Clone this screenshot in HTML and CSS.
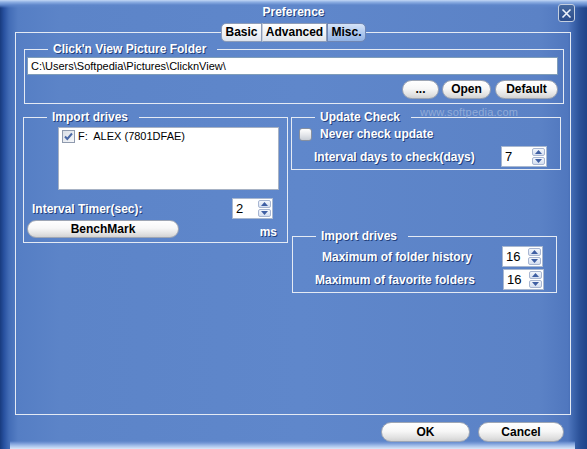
FILE: index.html
```html
<!DOCTYPE html>
<html>
<head>
<meta charset="utf-8">
<title>Preference</title>
<link rel="stylesheet" href="styles.css">
</head>
<body>
<div class="window">
  <div class="titlebar">
    <span></span>
    <div class="title">Preference</div>
    <div class="close-wrap">
      <div class="close">
        <svg width="11" height="11" viewBox="0 0 11 11"><path d="M1.5 1.5 L9.5 9.5 M9.5 1.5 L1.5 9.5" stroke="#eef3fb" stroke-width="1.6" fill="none"/></svg>
      </div>
    </div>
  </div>

  <div class="tabs">
    <div class="tab tab-basic">Basic</div>
    <div class="tab tab-adv">Advanced</div>
    <div class="tab tab-misc selected">Misc.</div>
  </div>

  <div class="frame">
    <fieldset class="group folder">
      <legend>Click'n View Picture Folder</legend>
      <div class="path">C:\Users\Softpedia\Pictures\ClicknView\</div>
      <div class="btn-row">
        <div class="pill w-dots">...</div>
        <div class="pill w-open">Open</div>
        <div class="pill w-default">Default</div>
      </div>
    </fieldset>

    <div class="columns">
      <fieldset class="group drives">
        <legend>Import drives</legend>
        <div class="listbox">
          <div class="list-item">
            <span class="check checked">
              <svg width="11" height="11" viewBox="0 0 11 11"><path d="M2 5.5 L4.3 8 L9 2.5" stroke="#4a68a6" stroke-width="2" fill="none"/></svg>
            </span>
            <span>F:&nbsp; ALEX (7801DFAE)</span>
          </div>
        </div>
        <div class="row timer-row">
          <span class="label">Interval Timer(sec):</span>
          <div class="spin w41">
            <span class="val">2</span>
            <span class="arrows">
              <span class="arrow"><svg width="7" height="4" viewBox="0 0 7 4"><path d="M0 4 L3.5 0 L7 4 Z" fill="#3f5fa3"/></svg></span>
              <span class="arrow"><svg width="7" height="4" viewBox="0 0 7 4"><path d="M0 0 L3.5 4 L7 0 Z" fill="#3f5fa3"/></svg></span>
            </span>
          </div>
        </div>
        <div class="row bench-row">
          <div class="pill bench">BenchMark</div>
          <span class="label ms">ms</span>
        </div>
      </fieldset>

      <div class="right-col">
        <fieldset class="group update">
          <legend>Update Check</legend>
          <div class="row never-row">
            <span class="check round"></span>
            <span class="label never">Never check update</span>
          </div>
          <div class="row days-row">
            <span class="label days">Interval days to check(days)</span>
            <div class="spin w46">
              <span class="val">7</span>
              <span class="arrows">
                <span class="arrow"><svg width="7" height="4" viewBox="0 0 7 4"><path d="M0 4 L3.5 0 L7 4 Z" fill="#3f5fa3"/></svg></span>
                <span class="arrow"><svg width="7" height="4" viewBox="0 0 7 4"><path d="M0 0 L3.5 4 L7 0 Z" fill="#3f5fa3"/></svg></span>
              </span>
            </div>
          </div>
        </fieldset>

        <fieldset class="group history">
          <legend>Import drives</legend>
          <div class="row hist-row">
            <span class="label hist">Maximum of folder history</span>
            <div class="spin w41">
              <span class="val">16</span>
              <span class="arrows">
                <span class="arrow"><svg width="7" height="4" viewBox="0 0 7 4"><path d="M0 4 L3.5 0 L7 4 Z" fill="#3f5fa3"/></svg></span>
                <span class="arrow"><svg width="7" height="4" viewBox="0 0 7 4"><path d="M0 0 L3.5 4 L7 0 Z" fill="#3f5fa3"/></svg></span>
              </span>
            </div>
          </div>
          <div class="row fav-row">
            <span class="label fav">Maximum of favorite folders</span>
            <div class="spin w41">
              <span class="val">16</span>
              <span class="arrows">
                <span class="arrow"><svg width="7" height="4" viewBox="0 0 7 4"><path d="M0 4 L3.5 0 L7 4 Z" fill="#3f5fa3"/></svg></span>
                <span class="arrow"><svg width="7" height="4" viewBox="0 0 7 4"><path d="M0 0 L3.5 4 L7 0 Z" fill="#3f5fa3"/></svg></span>
              </span>
            </div>
          </div>
        </fieldset>
      </div>
    </div>

    <div class="watermark">www.softpedia.com</div>
  </div>

  <div class="footer">
    <div class="pill ok">OK</div>
    <div class="pill cancel">Cancel</div>
  </div>
</div>
</body>
</html>
```

FILE: styles.css
```css
body {
  margin: 0;
  background: #5b82c6;
}

.window {
  width: 587px;
  height: 449px;
  overflow: hidden;
  font-family: "Liberation Sans", Arial, sans-serif;
  background:
    linear-gradient(0deg, #dbe7f8 0, #a9c3ec 3px, #7497d5 6px, rgba(116,151,213,0) 8px) 10px 100% / 565px 8px no-repeat,
    linear-gradient(180deg, #c3d7f5 0, #8fb0e4 2px, #5e86ca 5px, rgba(94,134,202,0) 8px),
    linear-gradient(90deg, #183b7e 0, #2851a0 4px, #426cb6 9px, #557ec4 18px, #5c84c8 60px, #5f87cb 300px, #5b82c6 540px, #5077be 568px, #3b63ab 574px, #2a5097 580px, #1f4389 587px);
}

/* title bar */
.titlebar {
  height: 22px;
  display: grid;
  grid-template-columns: 1fr auto 1fr;
  align-items: start;
}

.title {
  color: #fff;
  font-weight: bold;
  font-size: 12px;
  line-height: 14px;
  padding-top: 5px;
  text-shadow: 1px 1px 0 #23407c;
}

.close-wrap {
  justify-self: end;
  padding: 4px 12px 0 0;
}

.close {
  width: 17px;
  height: 18px;
  box-sizing: border-box;
  border: 1px solid #c4cfe0;
  border-radius: 3px;
  background: linear-gradient(#46699f, #2c4d8c);
  display: flex;
  align-items: center;
  justify-content: center;
}

/* tabs */
.tabs {
  position: relative;
  z-index: 2;
  margin-top: 1px;
  height: 19px;
  display: flex;
  justify-content: center;
}

.tab {
  box-sizing: border-box;
  height: 19px;
  border: 1px solid #8d9cb8;
  border-left: 1px solid #c8d0dc;
  background: linear-gradient(#ffffff, #eef1f6 60%, #dde3ec);
  font-weight: bold;
  font-size: 12px;
  line-height: 17px;
  text-align: center;
  color: #000;
}

.tab-basic {
  width: 41px;
  border-left: 1px solid #8d9cb8;
  border-radius: 5px 0 0 5px;
}

.tab-adv {
  width: 65px;
}

.tab-misc {
  width: 39px;
  border-radius: 0 5px 5px 0;
}

.tab.selected {
  background: linear-gradient(#d6e4f8, #adc7ee 55%, #93b3e4);
  border-color: #6f86b4;
}

/* main frame */
.frame {
  position: relative;
  margin: -10px 0 0 15px;
  width: 556px;
  height: 383px;
  box-sizing: border-box;
  border: 1px solid #e4eaf4;
}

.group {
  margin: 0;
  padding: 0;
  min-width: 0;
  border: 1px solid #e4eaf4;
  box-sizing: border-box;
}

.group legend {
  margin-left: 23px;
  padding: 0 11px 0 5px;
  color: #fff;
  font-weight: bold;
  font-size: 12px;
  line-height: 14px;
  text-shadow: 1px 1px 0 #23407c;
}

.label {
  color: #fff;
  font-weight: bold;
  font-size: 12px;
  line-height: 14px;
  text-shadow: 1px 1px 0 #23407c;
  white-space: nowrap;
}

/* folder group */
.folder {
  margin: 9px 0 0 8px;
  width: 540px;
  height: 62px;
}

.path {
  margin: 1px 5px 0 2px;
  height: 18px;
  box-sizing: border-box;
  border: 1px solid #7f9db9;
  background: #fff;
  font-size: 11px;
  line-height: 16px;
  padding-left: 3px;
  color: #000;
}

.btn-row {
  margin: 5px 5px 0 0;
  display: flex;
  justify-content: flex-end;
}

.pill {
  box-sizing: border-box;
  height: 19px;
  border: 1px solid #9ea6b4;
  border-radius: 10px;
  background: linear-gradient(#ffffff 0%, #f7f7f7 45%, #e2e2e2 80%, #d2d2d2 100%);
  font-weight: bold;
  font-size: 12px;
  line-height: 17px;
  text-align: center;
  color: #000;
}

.w-dots { width: 37px; }
.w-open { width: 49px; margin-left: 3px; }
.w-default { width: 63px; margin-left: 4px; }

/* columns */
.columns {
  margin: 6px 0 0 7px;
  display: grid;
  grid-template-columns: 265px 270px;
  column-gap: 3px;
  align-items: start;
}

.drives {
  height: 133px;
}

.listbox {
  margin: 3px 0 0 34px;
  width: 221px;
  height: 63px;
  box-sizing: border-box;
  border: 1px solid #a7b2c4;
  background: #fff;
  padding: 2px 3px;
}

.list-item {
  display: flex;
  align-items: center;
  gap: 3px;
  font-size: 11px;
  line-height: 13px;
  color: #000;
}

.check {
  width: 13px;
  height: 13px;
  box-sizing: border-box;
  flex: none;
  display: flex;
  align-items: center;
  justify-content: center;
}

.check.checked {
  border: 1px solid #8f9aae;
  background: linear-gradient(135deg, #d9dee6, #f6f7f9);
}

.check.round {
  border: 1px solid #8790a0;
  border-radius: 3px;
  background: linear-gradient(#ffffff, #e6e8ec 50%, #c9ced6);
}

.row {
  display: flex;
  align-items: center;
}

.timer-row {
  margin-top: 8px;
  height: 21px;
  justify-content: space-between;
  padding: 0 14px 0 8px;
}

.bench-row {
  margin-top: 1px;
  align-items: flex-start;
}

.bench {
  width: 152px;
  height: 18px;
  line-height: 16px;
  margin-left: 3px;
}

.ms {
  margin-left: auto;
  margin-right: 10px;
  padding-top: 5px;
}

/* spinners */
.spin {
  display: flex;
  box-sizing: border-box;
  height: 21px;
  border: 1px solid #a9b8d0;
  background: #fff;
  padding: 1px;
  flex: none;
}

.w41 { width: 41px; }
.w46 { width: 46px; }

.spin .val {
  flex: 1;
  font-size: 13px;
  line-height: 17px;
  padding-left: 2px;
  color: #000;
}

.arrows {
  display: flex;
  flex-direction: column;
  width: 13px;
  gap: 1px;
}

.arrow {
  flex: 1;
  box-sizing: border-box;
  border: 1px solid #a8b6d2;
  border-radius: 2px;
  background: linear-gradient(#f2f6fc, #d4def0);
  display: flex;
  align-items: center;
  justify-content: center;
}

/* right column */
.right-col {
  display: flex;
  flex-direction: column;
}

.update {
  width: 270px;
  height: 60px;
}

.never-row {
  margin-top: 3px;
  height: 14px;
  padding-left: 7px;
}

.never {
  margin-left: 8px;
}

.days-row {
  margin-top: 5px;
  height: 21px;
  padding: 0 13px 0 22px;
}

.days-row .spin,
.hist-row .spin,
.fav-row .spin {
  margin-left: auto;
}

.history {
  margin: 59px 0 0 1px;
  width: 265px;
  height: 64px;
}

.hist-row {
  margin-top: 3px;
  height: 21px;
  padding: 0 13px 0 29px;
}

.fav-row {
  margin-top: 2px;
  height: 21px;
  padding: 0 12px 0 22px;
}

.watermark {
  position: absolute;
  left: 404px;
  top: 73px;
  font-size: 11px;
  line-height: 13px;
  color: #91abd8;
  letter-spacing: 0.2px;
}

/* footer */
.footer {
  margin-top: 7px;
  display: flex;
  justify-content: flex-end;
  gap: 8px;
  padding-right: 23px;
}

.ok {
  width: 89px;
  height: 20px;
  line-height: 18px;
}

.cancel {
  width: 86px;
  height: 20px;
  line-height: 18px;
}
```
